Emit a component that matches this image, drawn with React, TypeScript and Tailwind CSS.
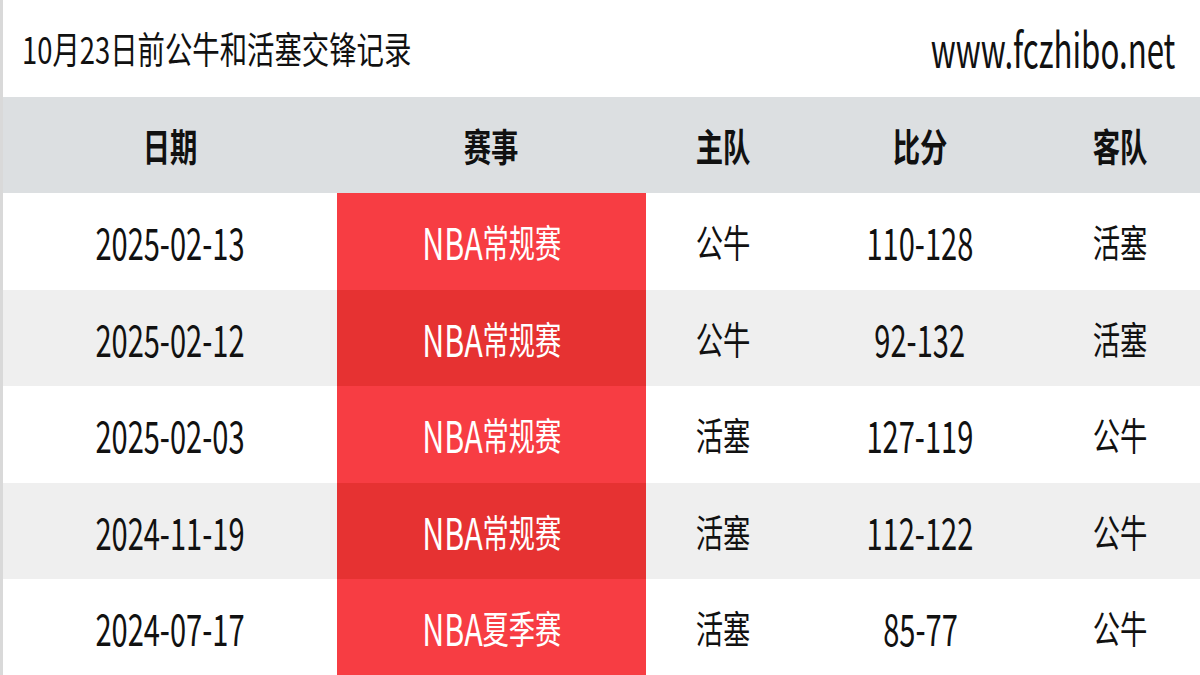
const rows = [
  { date: '2025-02-13', event: '常规赛', home: '公牛', score: '110-128', away: '活塞' },
  { date: '2025-02-12', event: '常规赛', home: '公牛', score: '92-132', away: '活塞' },
  { date: '2025-02-03', event: '常规赛', home: '活塞', score: '127-119', away: '公牛' },
  { date: '2024-11-19', event: '常规赛', home: '活塞', score: '112-122', away: '公牛' },
  { date: '2024-07-17', event: '夏季赛', home: '活塞', score: '85-77', away: '公牛' },
]

const cols = 'grid grid-cols-[334px_309px_154px_240px_160px]'

// digits / latin: bigger and narrower; hanzi: a touch smaller
function Num({ children }: { children: React.ReactNode }) {
  return <span className="inline-block scale-x-[0.66] text-[44px] leading-none">{children}</span>
}

function Han({ children, className = '' }: { children: React.ReactNode; className?: string }) {
  return <span className={`inline-block scale-x-[0.72] text-[38px] leading-none ${className}`}>{children}</span>
}

export default function App() {
  return (
    <div
      className="w-[1200px] h-[675px] overflow-hidden bg-white text-[#111] border-l-[3px] border-[#d9d9d9]"
      style={{ fontFamily: '"Noto Sans CJK SC", "Noto Sans", sans-serif' }}
    >
      {/* Title bar */}
      <div className="h-[97px] flex items-center justify-between pl-[19px] pr-[25px]">
        <span className="inline-block origin-left scale-x-[0.74] text-[37px] leading-none">10月23日前公牛和活塞交锋记录</span>
        <span className="inline-block origin-right scale-x-[0.65] text-[48px] leading-none -mt-[4px]">www.fczhibo.net</span>
      </div>

      {/* Table header */}
      <div className={`${cols} h-[96px] bg-[#dcdfe1] font-bold`}>
        {['日期', '赛事', '主队', '比分', '客队'].map((h) => (
          <div key={h} className="flex items-center justify-center">
            <Han>{h}</Han>
          </div>
        ))}
      </div>

      {/* Rows */}
      {rows.map((r, i) => {
        const odd = i % 2 === 1
        return (
          <div key={i} className={`${cols} h-[96.5px] ${odd ? 'bg-[#efefef]' : 'bg-white'}`}>
            <div className="flex items-center justify-center">
              <Num>{r.date}</Num>
            </div>
            <div className={`flex items-center justify-center text-white ${odd ? 'bg-[#e63232]' : 'bg-[#f73d43]'}`}>
              <span className="inline-flex items-center scale-x-[0.69] leading-none whitespace-nowrap">
                <span className="text-[44px]">NBA</span>
                <span className="text-[38px]">{r.event}</span>
              </span>
            </div>
            <div className="flex items-center justify-center">
              <Han>{r.home}</Han>
            </div>
            <div className="flex items-center justify-center">
              <Num>{r.score}</Num>
            </div>
            <div className="flex items-center justify-center">
              <Han>{r.away}</Han>
            </div>
          </div>
        )
      })}
    </div>
  )
}
